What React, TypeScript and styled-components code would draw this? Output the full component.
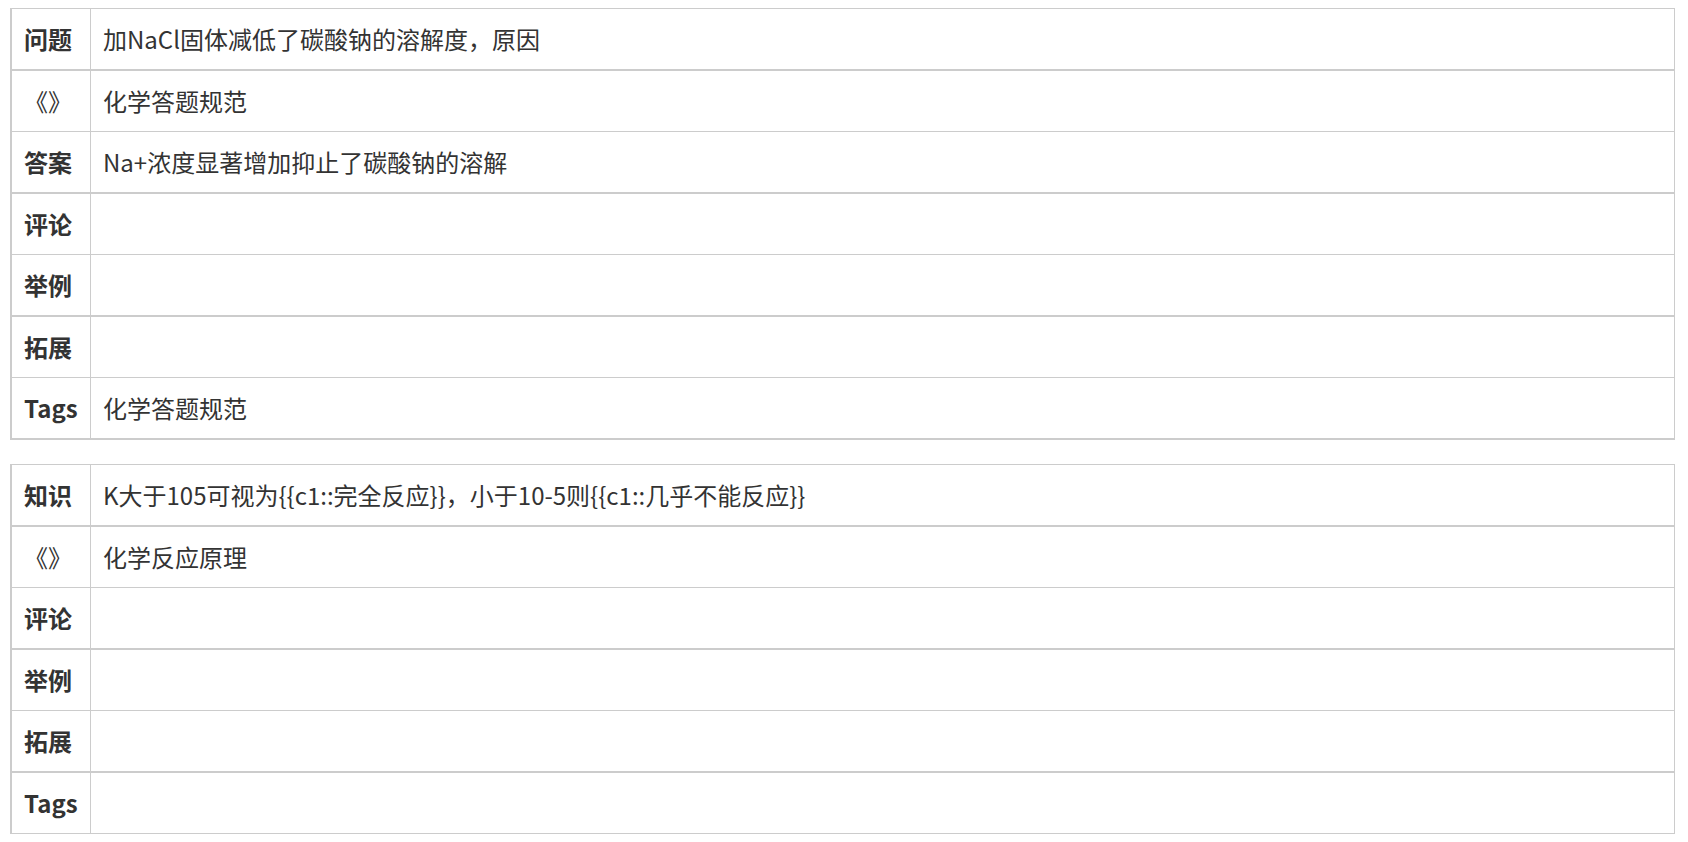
import React from "react";
import styled, { createGlobalStyle } from "styled-components";

const GlobalStyle = createGlobalStyle`
  html, body {
    margin: 0;
    padding: 0;
    background: #fff;
  }
  body {
    font-family: "Noto Sans CJK SC", "Noto Sans", sans-serif;
    color: #333;
  }
`;

const Page = styled.div`
  display: flex;
  flex-direction: column;
  gap: 24px;
  padding: 8px 13px 0 10px;
`;

const Card = styled.div`
  display: flex;
  flex-direction: column;
  border-style: solid;
  border-color: #ccc;
  border-width: 1px 1px 0 2px;
`;

const Row = styled.div<{ $thick: boolean }>`
  display: flex;
  min-height: 60px;
  border-bottom: ${(p) => (p.$thick ? 2 : 1)}px solid #ccc;
`;

const Label = styled.div<{ $plain?: boolean }>`
  flex: 0 0 79px;
  box-sizing: border-box;
  display: flex;
  align-items: center;
  padding: 0 12px;
  border-right: 1px solid #ccc;
  font-size: 24px;
  line-height: 36px;
  font-weight: ${(p) => (p.$plain ? 400 : 700)};
  white-space: nowrap;
`;

const Value = styled.div`
  flex: 1;
  display: flex;
  align-items: center;
  padding: 0 12px;
  font-size: 24px;
  line-height: 36px;
`;

type Field = { label: string; value?: string; plain?: boolean };

const note1: Field[] = [
  { label: "问题", value: "加NaCl固体减低了碳酸钠的溶解度，原因" },
  { label: "《》", value: "化学答题规范", plain: true },
  { label: "答案", value: "Na+浓度显著增加抑止了碳酸钠的溶解" },
  { label: "评论" },
  { label: "举例" },
  { label: "拓展" },
  { label: "Tags", value: "化学答题规范" },
];

const note2: Field[] = [
  {
    label: "知识",
    value: "K大于105可视为{{c1::完全反应}}，小于10-5则{{c1::几乎不能反应}}",
  },
  { label: "《》", value: "化学反应原理", plain: true },
  { label: "评论" },
  { label: "举例" },
  { label: "拓展" },
  { label: "Tags" },
];

function NoteCard({ fields }: { fields: Field[] }) {
  return (
    <Card>
      {fields.map((f, i) => (
        <Row key={f.label + i} $thick={i % 2 === 0}>
          <Label $plain={f.plain}>{f.label}</Label>
          <Value>{f.value}</Value>
        </Row>
      ))}
    </Card>
  );
}

export default function App() {
  return (
    <>
      <GlobalStyle />
      <Page>
        <NoteCard fields={note1} />
        <NoteCard fields={note2} />
      </Page>
    </>
  );
}
